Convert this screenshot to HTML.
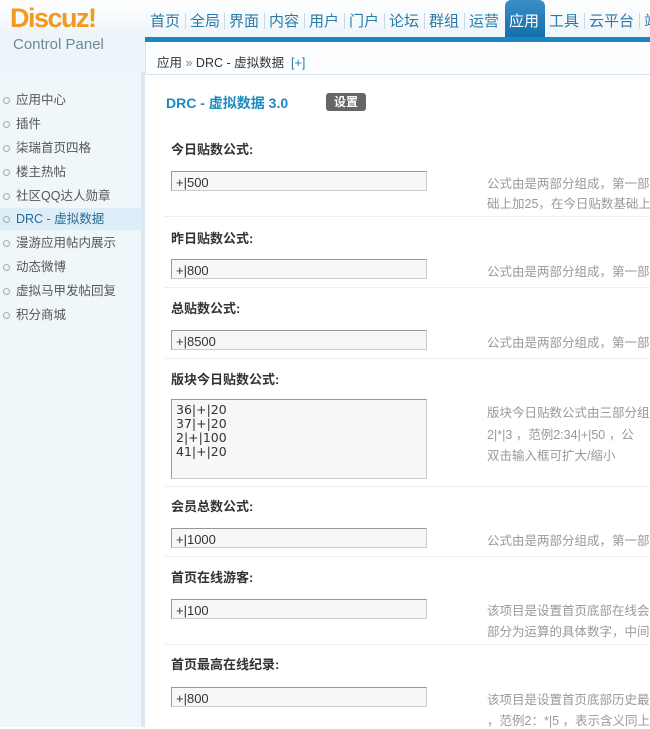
<!DOCTYPE html>
<html><head><meta charset="utf-8"><style>
*{margin:0;padding:0;box-sizing:border-box}
body{width:650px;height:727px;overflow:hidden;position:relative;background:#fff;font-family:"Liberation Sans","Noto Sans CJK SC",sans-serif;font-size:12px;color:#333}
.a{position:absolute;white-space:nowrap}
#top{left:0;top:0;width:650px;height:42px;background:linear-gradient(#fff,#eaf3f9)}
#lg{left:0;top:42px;width:145px;height:30px;background:#eef5fa}
#logo{left:10px;top:3px;font-size:27px;font-weight:bold;color:#f39a1e;letter-spacing:-1.5px}
#cp{left:13px;top:36px;font-size:15px;color:#6d8a9a}
.nav{top:10px;font-size:15px;color:#2a7aa8}
.sep{top:13px;width:1px;height:16px;background:#c8d8e4}
#act{left:505px;top:0;width:40px;height:42px;background:linear-gradient(#3a8fc6,#0f6aa5);border-radius:6px 6px 0 0}
#bar{left:145px;top:37px;width:505px;height:5px;background:#1b86c0}
#bc{left:145px;top:42px;width:505px;height:33px;background:#fcfdfe;border-bottom:1px solid #d8e4ec;border-left:1px solid #d8e4ec}
#side{left:0;top:72px;width:145px;height:655px;background:#f0f7fb;border-right:4px solid #dde9f2}
.si{left:0;width:141px;height:22px;padding-left:16px;line-height:22px;font-size:12.5px;color:#555}
.si:before{content:"";position:absolute;left:3px;top:8px;width:5px;height:5px;border:1px solid #aaa;border-radius:50%}
.lab{left:171px;font-weight:bold;font-size:13px;color:#333}
.in{left:171px;width:256px;height:20px;border:1px solid #999;border-right-color:#ccc;border-bottom-color:#ccc;background:#f7f7f7;font-size:13px;padding:3px 4px 0;line-height:15px;color:#333}
.ta{height:80px;line-height:14px;font-size:12.5px;font-family:"DejaVu Sans",sans-serif}
.d{left:487px;font-size:12.5px;color:#999}
.dot{left:165px;width:485px;border-top:1px dotted #ddd}
</style></head><body>
<div class="a" id="top"></div>
<div class="a" id="lg"></div>
<div class="a" id="logo">Discuz!</div>
<div class="a" id="cp">Control Panel</div>
<div class="a" id="act"></div>
<div class="a nav" style="left:150px">首页</div><div class="a sep" style="left:185px"></div>
<div class="a nav" style="left:190px">全局</div><div class="a sep" style="left:224px"></div>
<div class="a nav" style="left:229px">界面</div><div class="a sep" style="left:264px"></div>
<div class="a nav" style="left:269px">内容</div><div class="a sep" style="left:304px"></div>
<div class="a nav" style="left:309px">用户</div><div class="a sep" style="left:344px"></div>
<div class="a nav" style="left:349px">门户</div><div class="a sep" style="left:384px"></div>
<div class="a nav" style="left:389px">论坛</div><div class="a sep" style="left:424px"></div>
<div class="a nav" style="left:429px">群组</div><div class="a sep" style="left:464px"></div>
<div class="a nav" style="left:469px">运营</div>
<div class="a nav" style="left:509px;color:#fff">应用</div>
<div class="a nav" style="left:549px">工具</div><div class="a sep" style="left:584px"></div>
<div class="a nav" style="left:589px">云平台</div><div class="a sep" style="left:639px"></div>
<div class="a nav" style="left:644px">站</div>
<div class="a" id="bar"></div>
<div class="a" id="bc"></div>
<div class="a" style="left:157px;top:52px;font-size:12.5px;color:#333">应用 <span style="color:#888">»</span> DRC - 虚拟数据 <span style="color:#2a7aa8">&nbsp;[+]</span></div>
<div class="a" id="side"></div>
<div class="a si" style="top:89px">应用中心</div>
<div class="a si" style="top:113px">插件</div>
<div class="a si" style="top:137px">柒瑞首页四格</div>
<div class="a si" style="top:161px">楼主热帖</div>
<div class="a si" style="top:185px">社区QQ达人勋章</div>
<div class="a si" style="top:208px;background:#ddeef8;color:#2a6a96">DRC - 虚拟数据</div>
<div class="a si" style="top:232px">漫游应用帖内展示</div>
<div class="a si" style="top:256px">动态微博</div>
<div class="a si" style="top:280px">虚拟马甲发帖回复</div>
<div class="a si" style="top:304px">积分商城</div>
<div class="a" style="left:166px;top:93px;font-size:14px;font-weight:bold;color:#1a8ac0">DRC - 虚拟数据 3.0</div>
<div class="a" style="left:326px;top:93px;width:40px;height:18px;background:#666;border-radius:3px;color:#fff;font-size:12px;font-weight:bold;text-align:center;line-height:18px">设置</div>

<div class="a lab" style="top:139px">今日贴数公式:</div>
<div class="a in" style="top:171px">+|500</div>
<div class="a d" style="top:173px">公式由是两部分组成，第一部分</div>
<div class="a d" style="top:193px">础上加25，在今日贴数基础上乘</div>
<div class="a dot" style="top:216px"></div>

<div class="a lab" style="top:228px">昨日贴数公式:</div>
<div class="a in" style="top:259px">+|800</div>
<div class="a d" style="top:261px">公式由是两部分组成，第一部分</div>
<div class="a dot" style="top:287px"></div>

<div class="a lab" style="top:298px">总贴数公式:</div>
<div class="a in" style="top:330px">+|8500</div>
<div class="a d" style="top:332px">公式由是两部分组成，第一部分</div>
<div class="a dot" style="top:358px"></div>

<div class="a lab" style="top:369px">版块今日贴数公式:</div>
<div class="a in ta" style="top:399px">36|+|20<br>37|+|20<br>2|+|100<br>41|+|20</div>
<div class="a d" style="top:402px">版块今日贴数公式由三部分组成</div>
<div class="a d" style="top:424px">2|*|3 ，范例2:34|+|50 ，公</div>
<div class="a d" style="top:445px">双击输入框可扩大/缩小</div>
<div class="a dot" style="top:486px"></div>

<div class="a lab" style="top:496px">会员总数公式:</div>
<div class="a in" style="top:528px">+|1000</div>
<div class="a d" style="top:530px">公式由是两部分组成，第一部分</div>
<div class="a dot" style="top:556px"></div>

<div class="a lab" style="top:567px">首页在线游客:</div>
<div class="a in" style="top:599px">+|100</div>
<div class="a d" style="top:600px">该项目是设置首页底部在线会员</div>
<div class="a d" style="top:621px">部分为运算的具体数字，中间使</div>
<div class="a dot" style="top:644px"></div>

<div class="a lab" style="top:654px">首页最高在线纪录:</div>
<div class="a in" style="top:687px">+|800</div>
<div class="a d" style="top:689px">该项目是设置首页底部历史最高</div>
<div class="a d" style="top:710px">，范例2：*|5 ，表示含义同上</div>
</body></html>
